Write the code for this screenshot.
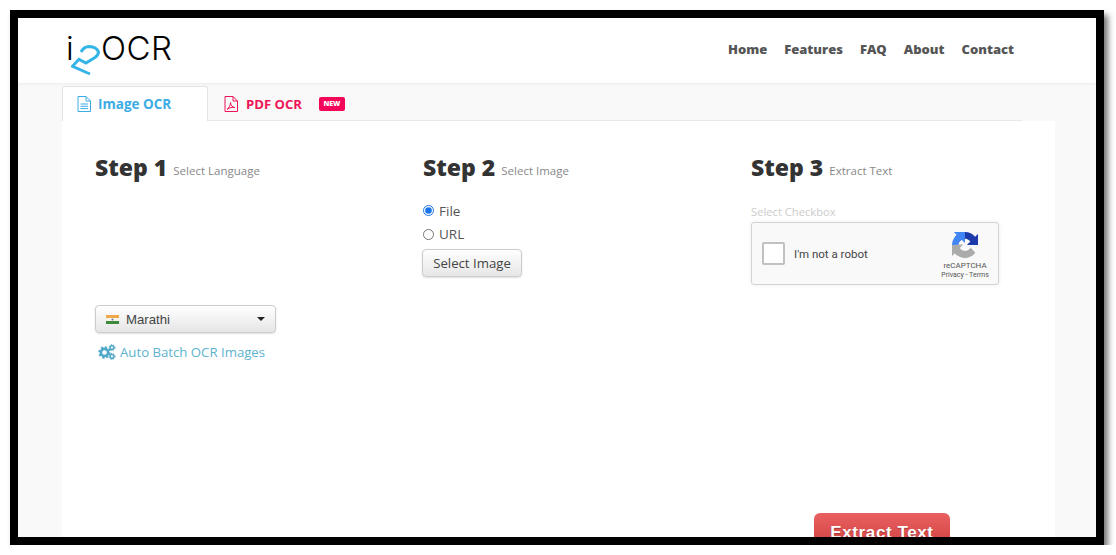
<div class="frame">
  <div class="screen">
    <header class="header">
      <div class="logo" aria-label="i2OCR">
        <span class="logo-i">i</span>
        <svg class="logo-two" viewBox="0 0 36 36" width="36" height="36" aria-hidden="true">
          <path d="M10 7 Q13 1.500 18 1.500 Q26 2 27.500 7 Q27.500 10 24 12.500 L15 18 L8 14.300 L1.500 21.300 L19 29" />
        </svg>
        <span class="logo-ocr">OCR</span>
      </div>
      <nav class="nav">
        <span>Home</span><span>Features</span><span>FAQ</span><span>About</span><span>Contact</span>
      </nav>
    </header>

    <main class="main">
      <div class="tabs">
        <div class="tab active">
          <svg viewBox="0 0 14 16" width="14" height="16" aria-hidden="true">
            <path d="M1 .5 H9 L13.500 5 V15.500 H1 Z M9 .5 V5 H13.500 M3.500 8 H11 M3.500 10.300 H11 M3.500 12.600 H11" />
          </svg>
          <span>Image OCR</span>
        </div>
        <div class="tab pdf">
          <svg viewBox="0 0 14 16" width="14" height="16" aria-hidden="true">
            <path d="M1 .5 H9 L13.500 5 V15.500 H1 Z M9 .5 V5 H13.500 M3 13.500 C5 12 6.500 9 6.500 6.500 C6.800 9.500 8.500 11.500 11 11.500 C8.500 11 5.500 11.500 3 13.500 Z" />
          </svg>
          <span>PDF OCR</span>
          <b class="badge">NEW</b>
        </div>
      </div>

      <section class="card">
        <div class="steps">
          <div class="step">
            <h2>Step 1 <small>Select Language</small></h2>
            <button class="select">
              <svg class="flag" viewBox="0 0 13 9" width="13" height="9" aria-hidden="true">
                <rect width="13" height="3" fill="#f0a94a" />
                <rect y="3" width="13" height="3" fill="#f5f3ea" />
                <rect y="6" width="13" height="3" fill="#3d8b3a" />
                <circle cx="6.500" cy="4.500" r="1" fill="#6a76a8" />
              </svg>
              <span>Marathi</span>
              <i class="caret"></i>
            </button>
            <div class="batch">
              <svg viewBox="0 0 18 16" width="18" height="16" aria-hidden="true">
                <circle class="g" cx="6.500" cy="8.500" r="3.600" stroke-width="2.600" />
                <circle class="t" cx="6.500" cy="8.500" r="5.400" stroke-width="1.600" stroke-dasharray="2.200 2" />
                <circle class="g" cx="14" cy="3.600" r="1.900" stroke-width="1.500" />
                <circle class="t" cx="14" cy="3.600" r="3" stroke-width="1" stroke-dasharray="1.300 1.200" />
                <circle class="g" cx="14" cy="12.400" r="1.900" stroke-width="1.500" />
                <circle class="t" cx="14" cy="12.400" r="3" stroke-width="1" stroke-dasharray="1.300 1.200" />
              </svg>
              <span>Auto Batch OCR Images</span>
            </div>
          </div>

          <div class="step">
            <h2>Step 2 <small>Select Image</small></h2>
            <div class="radios">
              <label><input type="radio" name="src" checked /> File</label>
              <label><input type="radio" name="src" /> URL</label>
            </div>
            <button class="pick">Select Image</button>
          </div>

          <div class="step">
            <h2>Step 3 <small>Extract Text</small></h2>
            <div class="hint">Select Checkbox</div>
            <div class="captcha">
              <div class="box"></div>
              <span class="robot">I'm not a robot</span>
              <div class="brand">
                <svg viewBox="0 0 64 64" width="26" height="26" aria-hidden="true">
                  <path fill="#1c3aa9" d="M64 31.955l-.033-1.37V4.687l-7.16 7.16C50.948 4.674 42.033.093 32.05.093c-10.400 0-19.622 4.960-25.458 12.640l11.736 11.860a15.550 15.550 0 0 1 4.754-5.334c2.050-1.600 4.952-2.906 8.968-2.906.485 0 .86.057 1.135.163 4.976.393 9.288 3.140 11.828 7.124l-8.307 8.307L64 31.953" />
                  <path fill="#4285f4" d="M31.862 0l-1.370.033H4.594l7.160 7.160C4.580 13.052 0 21.967 0 31.950c0 10.400 4.960 19.622 12.640 25.458L24.500 45.672a15.550 15.550 0 0 1-5.334-4.754c-1.600-2.050-2.906-4.952-2.906-8.968 0-.485.057-.86.163-1.135.393-4.976 3.140-9.288 7.124-11.828l8.307 8.307L31.860 0" />
                  <path fill="#ababab" d="M0 31.950l.033 1.370v25.898l7.160-7.160c5.860 7.173 14.775 11.754 24.760 11.754 10.400 0 19.622-4.960 25.458-12.640L45.675 38.300a15.550 15.550 0 0 1-4.754 5.334c-2.050 1.600-4.952 2.906-8.968 2.906-.485 0-.86-.057-1.135-.163-4.976-.393-9.288-3.140-11.828-7.124l8.307-8.307L0 31.950" />
                </svg>
                <span class="re">reCAPTCHA</span>
                <span class="terms">Privacy - Terms</span>
              </div>
            </div>
          </div>
        </div>
        <div class="actions">
          <button class="extract">Extract Text</button>
        </div>
      </section>
    </main>
  </div>
</div>

<style>
  :global(body) {
    margin: 0;
    background: #fff;
  }
  .frame {
    box-sizing: border-box;
    width: 1094px;
    height: 535px;
    margin: 10px 0 0 10px;
    border: 8px solid #000;
    box-shadow: 4px 5px 6px rgba(0, 0, 0, 0.55);
    overflow: hidden;
  }
  .screen {
    height: 100%;
    background: #f9f9f9;
    font-family: "Open Sans", sans-serif;
    overflow: hidden;
  }
  .header {
    height: 65px;
    background: #fff;
    box-shadow: 0 1px 3px rgba(0, 0, 0, 0.06);
    display: flex;
    align-items: flex-start;
    justify-content: space-between;
    padding: 0 82px 0 48px;
    position: relative;
  }
  .logo {
    display: flex;
    align-items: flex-start;
    height: 65px;
    color: #000;
    font-family: Inter, sans-serif;
    font-weight: 300;
    font-size: 33px;
    line-height: 34px;
  }
  .logo span {
    margin-top: 13px;
  }
  .logo-i {
    width: 5px;
  }
  .logo-two {
    margin: 27px 0 0 0;
    flex: none;
  }
  .logo-two path {
    fill: none;
    stroke: #35b4e8;
    stroke-width: 3;
  }
  .logo-ocr {
    letter-spacing: 0.5px;
    margin-left: -6px;
  }
  .nav {
    display: flex;
    gap: 17px;
    margin-top: 21px;
    font-size: 13px;
    line-height: 20px;
    font-weight: 800;
    color: #555;
  }
  .main {
    padding: 3px 41px 0 44px;
  }
  .tabs {
    display: flex;
    width: 960px;
    height: 35px;
    box-sizing: border-box;
    border-bottom: 1px solid #e8e8e8;
    font-size: 13.500px;
    font-weight: 700;
  }
  .tab {
    display: flex;
    align-items: center;
    height: 35px;
    box-sizing: border-box;
  }
  .tab span {
    line-height: 20px;
  }
  .tab svg {
    fill: none;
    stroke: currentColor;
    stroke-width: 1;
    flex: none;
  }
  .active {
    width: 146px;
    padding-left: 14px;
    gap: 7px;
    color: #3cace4;
    background: #fff;
    border: 1px solid #e4e4e4;
    border-bottom: none;
    border-radius: 3px 3px 0 0;
  }
  .pdf {
    padding-left: 16px;
    gap: 8px;
    color: #ee1558;
  }
  .pdf span {
    font-size: 13.100px;
  }
  .badge {
    margin-left: 9px;
    width: 26px;
    height: 14px;
    border-radius: 2px;
    background: #f5055a;
    color: #fff;
    font-size: 7px;
    line-height: 14px;
    text-align: center;
  }
  .card {
    background: #fff;
    width: 993px;
    height: 420px;
    box-sizing: border-box;
    padding: 29px 0 0 33px;
  }
  .steps {
    display: grid;
    grid-template-columns: repeat(3, 328px);
    height: 363px;
  }
  h2 {
    margin: 0;
    font-size: 23px;
    line-height: 34px;
    font-weight: 800;
    color: #333;
  }
  small {
    font-size: 11.500px;
    font-weight: 400;
    color: #888;
    position: relative;
    top: -1px;
  }
  .select {
    display: flex;
    align-items: center;
    box-sizing: border-box;
    width: 181px;
    height: 28px;
    margin-top: 116px;
    padding: 0 10px 0 10px;
    border: 1px solid #ccc;
    border-radius: 4px;
    background: linear-gradient(#fff, #e6e6e6);
    box-shadow: 0 1px 2px rgba(0, 0, 0, 0.12);
    font-family: "Liberation Sans", sans-serif;
    font-size: 13.200px;
    color: #444;
  }
  .flag {
    margin-right: 7px;
  }
  .caret {
    margin-left: auto;
    border-top: 4px solid #222;
    border-left: 4px solid transparent;
    border-right: 4px solid transparent;
  }
  .batch {
    display: flex;
    align-items: center;
    gap: 4px;
    margin: 9px 0 0 3px;
    font-size: 13.200px;
    line-height: 20px;
    color: #5cb3cf;
  }
  .batch .g, .batch .t {
    fill: none;
    stroke: #4fa8c8;
  }
  .radios {
    display: flex;
    flex-direction: column;
    margin-top: 10px;
    font-size: 13.500px;
    color: #555;
  }
  .radios label {
    display: flex;
    align-items: center;
    height: 23.500px;
    gap: 5px;
  }
  .radios input {
    margin: 0;
    width: 11px;
    height: 11px;
    accent-color: #1a73e8;
  }
  .pick {
    display: block;
    box-sizing: border-box;
    width: 100px;
    height: 28px;
    margin: 3px 0 0 -1px;
    padding: 0;
    border: 1px solid #ccc;
    border-radius: 4px;
    background: linear-gradient(#fff, #e6e6e6);
    box-shadow: 0 1px 2px rgba(0, 0, 0, 0.12);
    font-family: "Open Sans", sans-serif;
    font-size: 13.200px;
    color: #444;
  }
  .hint {
    margin-top: 15px;
    font-size: 11.200px;
    line-height: 16px;
    color: #ccc;
  }
  .captcha {
    display: flex;
    align-items: center;
    box-sizing: border-box;
    width: 248px;
    height: 63px;
    margin-top: 2px;
    padding-left: 10px;
    background: #f9f9f9;
    border: 1px solid #d3d3d3;
    border-radius: 3px;
    box-shadow: 0 0 4px rgba(0, 0, 0, 0.08);
    font-family: Roboto, sans-serif;
    color: #444;
  }
  .box {
    box-sizing: border-box;
    width: 23px;
    height: 23px;
    background: #fff;
    border: 2px solid #c1c1c1;
    border-radius: 2px;
  }
  .robot {
    margin-left: 9px;
    font-size: 11.500px;
  }
  .brand {
    display: flex;
    flex-direction: column;
    align-items: center;
    margin-left: auto;
    width: 58px;
    padding: 5px 4px 0 0;
    color: #555;
  }
  .re {
    margin-top: 2px;
    font-size: 8px;
    line-height: 11px;
  }
  .terms {
    font-size: 7px;
    line-height: 9px;
  }
  .actions {
    padding-left: 719px;
  }
  .extract {
    display: block;
    width: 136px;
    height: 42px;
    padding: 0 0 2px;
    border: none;
    border-radius: 6px;
    background: linear-gradient(#ea6060, #c83a3a);
    color: #fff;
    font-family: "Liberation Sans", sans-serif;
    font-size: 17px;
    font-weight: 700;
    letter-spacing: 0.6px;
    text-shadow: 0 1px 1px rgba(0, 0, 0, 0.3);
  }
</style>
